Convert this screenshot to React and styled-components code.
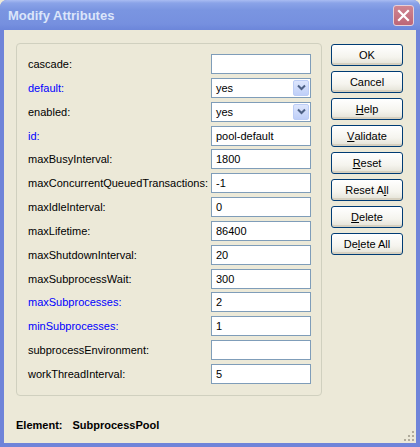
import styled, { createGlobalStyle } from "styled-components";

const Global = createGlobalStyle`
  html, body {
    margin: 0;
    padding: 0;
    background: #ece9d8;
  }
  * { box-sizing: border-box; }
`;

const Window = styled.div`
  width: 420px;
  height: 447px;
  display: flex;
  flex-direction: column;
  background: #6f84d9;
  border-radius: 7px 7px 0 0;
  overflow: hidden;
  font-family: Tahoma, "Liberation Sans", Arial, sans-serif;
`;

const TitleBar = styled.div`
  height: 30px;
  flex: none;
  display: flex;
  align-items: center;
  justify-content: space-between;
  padding: 0 6px 0 8px;
  background: linear-gradient(
    to bottom,
    #a9bcf2 0px,
    #8aa3e8 3px,
    #7a95e1 10px,
    #7690df 24px,
    #6c86da 30px
  );
`;

const Title = styled.span`
  color: #dbe5fa;
  font-family: "Liberation Sans", Arial, sans-serif;
  font-weight: bold;
  font-size: 13px;
  padding-top: 1px;
`;

const CloseButton = styled.div`
  width: 21px;
  height: 21px;
  border-radius: 3px;
  border: 1px solid #e6d0d8;
  background: linear-gradient(to bottom, #cf8591, #bd6677);
  display: flex;
  align-items: center;
  justify-content: center;
`;

const Client = styled.div`
  flex: 1;
  margin: 0 4px 4px 4px;
  background: #ece9d8;
  position: relative;
  display: flex;
  flex-direction: column;
  padding: 13px 12px 0 12px;
`;

const Main = styled.div`
  display: flex;
  align-items: flex-start;
  gap: 9px;
`;

const Group = styled.div`
  width: 306px;
  height: 353px;
  border: 1px solid #d0d0bf;
  border-radius: 4px;
  padding: 10px 11px 0 11px;
  display: grid;
  grid-template-columns: 183px 100px;
  grid-auto-rows: 20px;
  row-gap: 3.85px;
  align-items: center;
`;

const Label = styled.span`
  font-size: 11px;
  color: ${(p) => (p.$required ? "#0000ff" : "#000")};
  white-space: nowrap;
`;

const TextBox = styled.div`
  height: 20px;
  border: 1px solid #7f9db9;
  background: #fff;
  font-size: 11px;
  color: #000;
  display: flex;
  align-items: center;
  padding-left: 4px;
`;

const Select = styled(TextBox)`
  justify-content: space-between;
  padding-right: 1px;
`;

const DropArrow = styled.div`
  width: 16px;
  height: 16px;
  border-radius: 2px;
  border: 1px solid #bccdf6;
  background: linear-gradient(to bottom, #dde6fd, #bfcff8);
  display: flex;
  align-items: center;
  justify-content: center;
`;

const Buttons = styled.div`
  display: flex;
  flex-direction: column;
  gap: 5px;
  padding-top: 1px;
`;

const Button = styled.div`
  width: 72px;
  height: 22px;
  border: 1px solid #003c74;
  border-radius: 3px;
  background: linear-gradient(to bottom, #ffffff 0%, #f5f4ee 60%, #e3e1d5 100%);
  box-shadow: inset 0 -2px 0 #d6d0c0;
  font-size: 11px;
  color: #000;
  display: flex;
  align-items: center;
  justify-content: center;
  white-space: pre;
  padding-bottom: 1px;
  u { text-underline-offset: 1px; }
`;

const Footer = styled.div`
  margin-top: 23px;
  font-size: 11px;
  font-weight: bold;
  color: #000;
  display: flex;
  gap: 10px;
  font-family: "Liberation Sans", Arial, sans-serif;
`;

const Grip = styled.div`
  position: absolute;
  right: 2px;
  bottom: 2px;
  display: grid;
  grid-template-columns: repeat(3, 2px);
  grid-template-rows: repeat(3, 2px);
  gap: 2px;
`;

const Dot = styled.span`
  width: 2px;
  height: 2px;
  background: ${(p) => (p.$on ? "#b0ab9b" : "transparent")};
`;

const rows = [
  { name: "cascade", value: "" },
  { name: "default", value: "yes", req: true, select: true },
  { name: "enabled", value: "yes", select: true },
  { name: "id", value: "pool-default", req: true },
  { name: "maxBusyInterval", value: "1800" },
  { name: "maxConcurrentQueuedTransactions", value: "-1" },
  { name: "maxIdleInterval", value: "0" },
  { name: "maxLifetime", value: "86400" },
  { name: "maxShutdownInterval", value: "20" },
  { name: "maxSubprocessWait", value: "300" },
  { name: "maxSubprocesses", value: "2", req: true },
  { name: "minSubprocesses", value: "1", req: true },
  { name: "subprocessEnvironment", value: "" },
  { name: "workThreadInterval", value: "5" },
];

function Chevron() {
  return (
    <svg width="9" height="7" viewBox="0 0 9 7">
      <path d="M1 1.5 L4.5 5 L8 1.5" fill="none" stroke="#4d6185" strokeWidth="2" />
    </svg>
  );
}

export default function App() {
  const grip = [0, 0, 1, 0, 1, 1, 1, 1, 1];
  return (
    <>
      <Global />
      <Window>
        <TitleBar>
          <Title>Modify Attributes</Title>
          <CloseButton>
            <svg width="13" height="13" viewBox="0 0 13 13">
              <path d="M2 2 L11 11 M11 2 L2 11" stroke="#fff" strokeWidth="2.2" strokeLinecap="square" />
            </svg>
          </CloseButton>
        </TitleBar>
        <Client>
          <Main>
            <Group>
              {rows.map((r) => (
                <>
                  <Label key={r.name + "l"} $required={r.req}>
                    {r.name}:
                  </Label>
                  {r.select ? (
                    <Select key={r.name + "v"}>
                      {r.value}
                      <DropArrow>
                        <Chevron />
                      </DropArrow>
                    </Select>
                  ) : (
                    <TextBox key={r.name + "v"}>{r.value}</TextBox>
                  )}
                </>
              ))}
            </Group>
            <Buttons>
              <Button>OK</Button>
              <Button>Cancel</Button>
              <Button><u>H</u>elp</Button>
              <Button><u>V</u>alidate</Button>
              <Button><u>R</u>eset</Button>
              <Button>Reset A<u>l</u>l</Button>
              <Button><u>D</u>elete</Button>
              <Button>De<u>l</u>ete All</Button>
            </Buttons>
          </Main>
          <Footer>
            <span>Element:</span>
            <span>SubprocessPool</span>
          </Footer>
          <Grip>
            {grip.map((on, i) => (
              <Dot key={i} $on={on} />
            ))}
          </Grip>
        </Client>
      </Window>
    </>
  );
}
